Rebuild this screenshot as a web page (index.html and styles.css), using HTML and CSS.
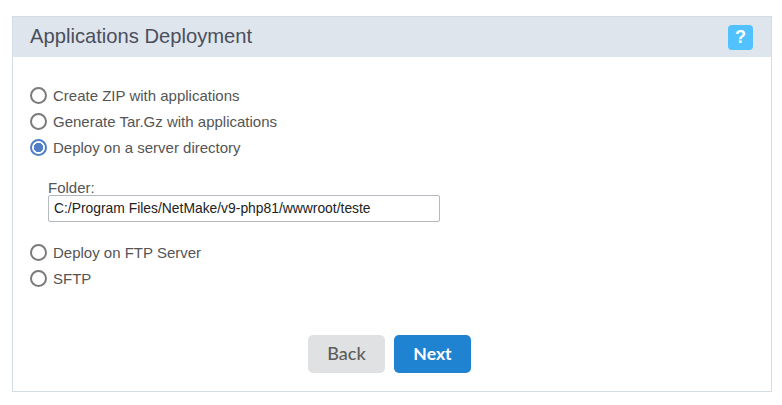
FILE: index.html
```html
<!DOCTYPE html>
<html lang="en">
<head>
<meta charset="utf-8">
<title>Applications Deployment</title>
<link rel="stylesheet" href="styles.css">
</head>
<body>
<main class="panel">
  <header class="panel-head">
    <h1 class="panel-title">Applications Deployment</h1>
    <a class="help" href="#">?</a>
  </header>
  <form class="panel-body">
    <div class="options">
      <label class="option"><input class="radio" type="radio" name="mode"><span>Create ZIP with applications</span></label>
      <label class="option"><input class="radio" type="radio" name="mode"><span>Generate Tar.Gz with applications</span></label>
      <label class="option"><input class="radio" type="radio" name="mode" checked><span>Deploy on a server directory</span></label>
    </div>
    <div class="folder">
      <label class="folder-label" for="folder">Folder:</label>
      <input class="folder-input" id="folder" type="text" value="C:/Program Files/NetMake/v9-php81/wwwroot/teste">
    </div>
    <div class="options">
      <label class="option"><input class="radio" type="radio" name="mode"><span>Deploy on FTP Server</span></label>
      <label class="option"><input class="radio" type="radio" name="mode"><span>SFTP</span></label>
    </div>
    <div class="actions">
      <button class="btn btn-back" type="button">Back</button>
      <button class="btn btn-next" type="button">Next</button>
    </div>
  </form>
</main>
</body>
</html>
```
FILE: styles.css
```css
* { box-sizing: border-box; }
html, body { margin: 0; background: #fff; }
body {
  padding: 16px 10px 14px 12px;
  font-family: "Liberation Sans", Arial, sans-serif;
  color: #555;
}
.panel {
  width: 760px;
  height: 376px;
  border: 1px solid #d3dde6;
  display: flex;
  flex-direction: column;
}
.panel-head {
  height: 40px;
  padding: 0 18px 0 17px;
  background: #dfe5ed;
  display: flex;
  align-items: center;
  justify-content: space-between;
}
.panel-title {
  margin: -2px 0 0;
  font-size: 20.2px;
  font-weight: 400;
  color: #4a4f5c;
}
.help {
  width: 25px;
  height: 25px;
  border-radius: 4px;
  background: #52c1ff;
  color: #fff;
  font-size: 18px;
  font-weight: 700;
  line-height: 25px;
  text-align: center;
  text-decoration: none;
}
.panel-body {
  flex: 1;
  padding: 25px 22px 18px 17px;
  display: flex;
  flex-direction: column;
}
.options { display: flex; flex-direction: column; }
.option {
  height: 26px;
  display: flex;
  align-items: center;
  gap: 6px;
  font-size: 15px;
}
.radio {
  appearance: none;
  width: 17px;
  height: 17px;
  margin: 0;
  border: 2px solid #7b7b7b;
  border-radius: 50%;
  background: #fff;
  flex: none;
}
.radio:checked {
  border-color: #4f7fc4;
  background: radial-gradient(circle, #4f7fc4 0 4.4px, #fff 5px);
}
.folder {
  margin: 20px 0 17px 18px;
  display: flex;
  flex-direction: column;
}
.folder-label {
  font-size: 15px;
  line-height: 15px;
  color: #555;
}
.folder-input {
  width: 392px;
  height: 27px;
  padding: 0 5px 2px;
  border: 1px solid #b4b9bf;
  border-radius: 2px;
  background: #fff;
  font-family: "Liberation Sans", Arial, sans-serif;
  font-size: 13.86px;
  color: #222;
}
.actions {
  margin-top: auto;
  display: flex;
  justify-content: center;
  gap: 9px;
}
.btn {
  width: 77px;
  height: 38px;
  padding: 0 0 2px;
  border: 0;
  border-radius: 5px;
  font-family: Lato, sans-serif;
  font-size: 18px;
  font-weight: 500;
}
.btn-back { background: #e0e1e3; color: #5c5c5c; }
.btn-next { background: #2083d2; color: #fff; font-weight: 700; font-size: 17.6px; }
```
